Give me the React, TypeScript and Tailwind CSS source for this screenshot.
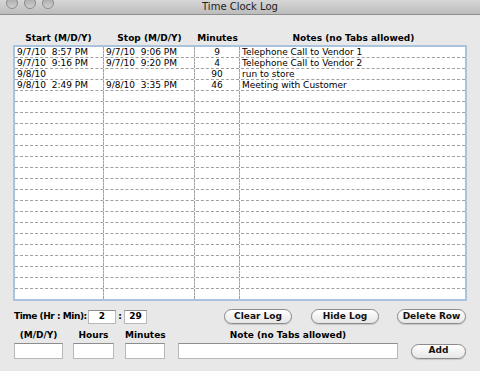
import React from "react";

const rows: [string, string, string, string][] = [
  ["9/7/10  8:57 PM", "9/7/10  9:06 PM", "9", "Telephone Call to Vendor 1"],
  ["9/7/10  9:16 PM", "9/7/10  9:20 PM", "4", "Telephone Call to Vendor 2"],
  ["9/8/10", "", "90", "run to store"],
  ["9/8/10  2:49 PM", "9/8/10  3:35 PM", "46", "Meeting with Customer"],
];

const allRows = Array.from({ length: 23 }, (_, i) => rows[i] ?? ["", "", "", ""]);

function Btn({ label, w }: { label: string; w: string }) {
  return (
    <div
      className={`${w} h-[15px] rounded-full border border-[#8a8a8a] bg-gradient-to-b from-white to-[#e6e6e6] flex items-center justify-center text-[9px] font-bold text-[#111] shadow-[0_1px_1px_rgba(0,0,0,0.15)]`}
    >
      {label}
    </div>
  );
}

function Field({ w, h, value, center }: { w: string; h: string; value?: string; center?: boolean }) {
  return (
    <div
      className={`${w} ${h} bg-white border border-[#b8b8b8] border-t-[#8c8c8c] text-[9px] font-bold flex items-center ${center ? "justify-center" : "px-1"}`}
    >
      {value}
    </div>
  );
}

export default function App() {
  return (
    <div
      className="w-[480px] h-[371px] bg-[#e8e8e8] flex flex-col overflow-hidden text-black"
      style={{ fontFamily: '"DejaVu Sans", "Liberation Sans", sans-serif' }}
    >
      <div className="h-[15px] bg-gradient-to-b from-[#d6d6d6] to-[#bcbcbc] border-b border-[#8e8e8e] flex items-center relative">
        <div className="absolute left-[6px] top-[-3px] flex gap-[6px]">
          <div className="w-[12px] h-[12px] rounded-full bg-gradient-to-b from-[#a8a8a8] to-[#d0d0d0] border border-[#8a8a8a]" />
          <div className="w-[12px] h-[12px] rounded-full bg-gradient-to-b from-[#a8a8a8] to-[#d0d0d0] border border-[#8a8a8a]" />
          <div className="w-[12px] h-[12px] rounded-full bg-gradient-to-b from-[#a8a8a8] to-[#d0d0d0] border border-[#8a8a8a]" />
        </div>
        <div className="w-full text-center text-[10px] text-[#222] leading-none pb-[1px]">Time Clock Log</div>
      </div>

      <div className="ml-[13px] w-[454px] mt-[18px] flex text-[9px] font-bold h-[11px] items-center">
        <div className="w-[91px] text-center">Start (M/D/Y)</div>
        <div className="w-[91px] text-center">Stop (M/D/Y)</div>
        <div className="w-[45px] text-center">Minutes</div>
        <div className="flex-1 text-center">Notes (no Tabs allowed)</div>
      </div>

      <div className="ml-[13px] w-[454px] mt-[1px] h-[256px] border-2 border-[#a9c3dd] bg-white overflow-hidden">
        {allRows.map((r, i) => (
          <div key={i} className="flex h-[11px] border-b border-dashed border-[#a0a0a0] text-[9px] leading-[10px]">
            <div className="w-[89px] border-r border-dashed border-[#a0a0a0] pl-[2px] whitespace-pre">{r[0]}</div>
            <div className="w-[91px] border-r border-dashed border-[#a0a0a0] pl-[2px] whitespace-pre">{r[1]}</div>
            <div className="w-[45px] border-r border-dashed border-[#a0a0a0] text-center">{r[2]}</div>
            <div className="flex-1 pl-[2px]">{r[3]}</div>
          </div>
        ))}
      </div>

      <div className="flex items-center mt-[8px] h-[15px]">
        <div className="ml-[14px] w-[74px] text-[9px] font-bold whitespace-nowrap tracking-[-0.45px]">Time (Hr : Min):</div>
        <Field w="w-[28px]" h="h-[14px]" value="2" center />
        <div className="w-[8px] text-center text-[9px] font-bold">:</div>
        <Field w="w-[23px]" h="h-[14px]" value="29" center />
        <div className="ml-[77px]">
          <Btn label="Clear Log" w="w-[68px]" />
        </div>
        <div className="ml-[19px]">
          <Btn label="Hide Log" w="w-[68px]" />
        </div>
        <div className="ml-[18px]">
          <Btn label="Delete Row" w="w-[69px]" />
        </div>
      </div>

      <div className="flex mt-[6px] text-[9px] font-bold h-[11px] items-center">
        <div className="ml-[14px] w-[49px] text-center">(M/D/Y)</div>
        <div className="ml-[10px] w-[41px] text-center">Hours</div>
        <div className="ml-[11px] w-[40px] text-center">Minutes</div>
        <div className="ml-[13px] w-[220px] text-center">Note (no Tabs allowed)</div>
      </div>

      <div className="flex items-center mt-[2px]">
        <div className="ml-[14px]"><Field w="w-[49px]" h="h-[16px]" /></div>
        <div className="ml-[10px]"><Field w="w-[41px]" h="h-[16px]" /></div>
        <div className="ml-[11px]"><Field w="w-[40px]" h="h-[16px]" /></div>
        <div className="ml-[13px]"><Field w="w-[220px]" h="h-[16px]" /></div>
        <div className="ml-[13px]"><Btn label="Add" w="w-[55px]" /></div>
      </div>
    </div>
  );
}
